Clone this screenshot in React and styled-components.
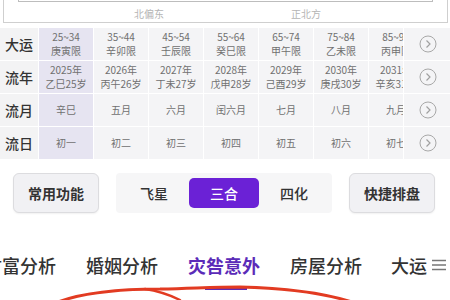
import styled, { createGlobalStyle } from 'styled-components'

const GlobalStyle = createGlobalStyle`
  body {
    margin: 0;
    background: #ffffff;
    font-family: "Noto Sans CJK SC", "Noto Sans", sans-serif;
  }
`

const Page = styled.div`
  position: relative;
  width: 450px;
  height: 300px;
  overflow: hidden;
  background: #ffffff;
`

const Frame = styled.div`
  margin: 0 2px 0 3px;
  height: 22px;
  border: 1px solid #cfcfcf;
  border-top: none;
`

const InnerBox = styled.div`
  margin: 0 14px;
  height: 1px;
  border: 1px solid #bdbdbd;
  border-top: none;
`

const Directions = styled.div`
  display: flex;
  gap: 127px;
  padding-left: 130px;
  margin-top: 5px;
  font-size: 10px;
  line-height: 14px;
  color: #b4b4b4;
`

const Table = styled.div`
  margin-top: 5px;
  display: flex;
  flex-direction: column;
  gap: 1px;
`

const Row = styled.div`
  display: flex;
  gap: 1px;
  height: 32px;
`

const Label = styled.div`
  flex: 0 0 38px;
  display: flex;
  align-items: center;
  justify-content: center;
  background: #f3f3f4;
  font-size: 14px;
  font-weight: 500;
  color: #333;
`

const Viewport = styled.div`
  flex: 0 0 364px;
  display: flex;
  gap: 1px;
  overflow: hidden;
`

const Cell = styled.div`
  flex: 0 0 54px;
  display: flex;
  flex-direction: column;
  align-items: center;
  justify-content: center;
  background: ${p => (p.$active ? '#e6e4f1' : '#f4f4f6')};
  font-size: 10px;
  line-height: 14.5px;
  color: #707070;
  white-space: nowrap;
`

const Line = styled.div`
  display: block;
`

const ClipCell = styled.div`
  flex: 0 0 33px;
  padding-right: 8px;
  box-sizing: border-box;
  background: #f4f4f6;
  display: flex;
`

const ClipInner = styled.div`
  width: 100%;
  overflow: hidden;
  display: flex;
`

const ClipText = styled.div`
  flex: 0 0 54px;
  display: flex;
  flex-direction: column;
  align-items: center;
  justify-content: center;
  font-size: 10px;
  line-height: 14.5px;
  color: #707070;
  white-space: nowrap;
`

const ArrowCell = styled.div`
  flex: 0 0 47px;
  display: flex;
  align-items: center;
  justify-content: center;
  background: #f4f4f6;
`

const ButtonBar = styled.div`
  display: flex;
  align-items: center;
  gap: 17px;
  margin-top: 14px;
  padding-left: 13px;
`

const PlainButton = styled.div`
  width: 86px;
  height: 40px;
  box-sizing: border-box;
  display: flex;
  align-items: center;
  justify-content: center;
  background: #f1f1f4;
  border: 1px solid #dcdcdf;
  border-radius: 6px;
  box-shadow: 0 1px 2px rgba(0, 0, 0, 0.06);
  font-size: 14px;
  font-weight: 600;
  color: #333;
`

const Segmented = styled.div`
  width: 216px;
  height: 40px;
  box-sizing: border-box;
  padding: 5px 3px;
  display: grid;
  grid-template-columns: 1fr 1fr 1fr;
  background: #f6f6f7;
  border-radius: 4px;
`

const Segment = styled.div`
  display: flex;
  align-items: center;
  justify-content: center;
  border-radius: 5px;
  font-size: 14px;
  font-weight: 500;
  background: ${p => (p.$active ? '#6b21d6' : 'transparent')};
  color: ${p => (p.$active ? '#ffffff' : '#333')};
`

const TabsWrap = styled.div`
  margin-top: 40px;
  overflow: hidden;
`

const TabList = styled.div`
  display: flex;
  align-items: flex-start;
  gap: 30px;
  margin-left: -16px;
  white-space: nowrap;
`

const Tab = styled.div`
  display: flex;
  flex-direction: column;
  align-items: center;
  font-size: 18px;
  line-height: 24px;
  font-weight: ${p => (p.$active ? 700 : 500)};
  color: ${p => (p.$active ? '#5b2bb8' : '#333')};
`

const Indicator = styled.div`
  width: 42px;
  height: 2px;
  margin-top: 11px;
  margin-left: 4px;
  background: #5b2bb8;
`

const MenuTab = styled.div`
  display: flex;
  align-items: center;
  gap: 5px;
  height: 24px;
  margin-left: -1px;
  font-size: 18px;
  font-weight: 500;
  color: #333;
`

const Annotation = styled.svg`
  position: absolute;
  left: 0;
  top: 280px;
  pointer-events: none;
`

const rows = [
  {
    label: '大运',
    cells: [
      ['25~34', '庚寅限'],
      ['35~44', '辛卯限'],
      ['45~54', '壬辰限'],
      ['55~64', '癸巳限'],
      ['65~74', '甲午限'],
      ['75~84', '乙未限'],
      ['85~94', '丙申限'],
    ],
  },
  {
    label: '流年',
    cells: [
      ['2025年', '乙巳25岁'],
      ['2026年', '丙午26岁'],
      ['2027年', '丁未27岁'],
      ['2028年', '戊申28岁'],
      ['2029年', '己酉29岁'],
      ['2030年', '庚戌30岁'],
      ['2031年', '辛亥31岁'],
    ],
  },
  {
    label: '流月',
    cells: [['辛巳'], ['五月'], ['六月'], ['闰六月'], ['七月'], ['八月'], ['九月']],
  },
  {
    label: '流日',
    cells: [['初一'], ['初二'], ['初三'], ['初四'], ['初五'], ['初六'], ['初七']],
  },
]

function CircleArrow() {
  return (
    <svg width="18" height="18" viewBox="0 0 18 18">
      <circle cx="9" cy="9" r="8" fill="none" stroke="#a8a8a8" strokeWidth="1" />
      <path d="M7.5 5.5 L11 9 L7.5 12.5" fill="none" stroke="#a0a0a0" strokeWidth="1.2" />
    </svg>
  )
}

function MenuIcon() {
  return (
    <svg width="14" height="12" viewBox="0 0 14 12">
      <path d="M0 1.5h14M0 6h14M0 10.5h14" stroke="#777" strokeWidth="1.4" />
    </svg>
  )
}

export default function App() {
  return (
    <Page>
      <GlobalStyle />
      <Frame>
        <InnerBox />
        <Directions>
          <span>北偏东</span>
          <span>正北方</span>
        </Directions>
      </Frame>

      <Table>
        {rows.map(row => (
          <Row key={row.label}>
            <Label>{row.label}</Label>
            <Viewport>
              {row.cells.slice(0, 6).map((c, i) => (
                <Cell key={i} $active={i === 0}>
                  {c.map(t => (
                    <Line key={t}>{t}</Line>
                  ))}
                </Cell>
              ))}
              <ClipCell>
                <ClipInner>
                  <ClipText>
                    {row.cells[6].map(t => (
                      <Line key={t}>{t}</Line>
                    ))}
                  </ClipText>
                </ClipInner>
              </ClipCell>
            </Viewport>
            <ArrowCell>
              <CircleArrow />
            </ArrowCell>
          </Row>
        ))}
      </Table>

      <ButtonBar>
        <PlainButton>常用功能</PlainButton>
        <Segmented>
          <Segment>飞星</Segment>
          <Segment $active>三合</Segment>
          <Segment>四化</Segment>
        </Segmented>
        <PlainButton>快捷排盘</PlainButton>
      </ButtonBar>

      <TabsWrap>
        <TabList>
          <Tab>财富分析</Tab>
          <Tab>婚姻分析</Tab>
          <Tab $active>
            灾咎意外
            <Indicator />
          </Tab>
          <Tab>房屋分析</Tab>
          <MenuTab>
            大运
            <MenuIcon />
          </MenuTab>
        </TabList>
      </TabsWrap>

      <Annotation width="450" height="20" viewBox="0 280 450 20">
        <path
          d="M58 302 C 85 292, 120 289, 160 289 C 200 288, 215 287, 240 287 C 285 288, 320 292, 352 302"
          fill="none"
          stroke="#e23b22"
          strokeWidth="3"
          strokeLinecap="round"
        />
        <path d="M145 289 C 158 291, 168 294, 180 300" fill="none" stroke="#e23b22" strokeWidth="2.5" strokeLinecap="round" />
      </Annotation>
    </Page>
  )
}
